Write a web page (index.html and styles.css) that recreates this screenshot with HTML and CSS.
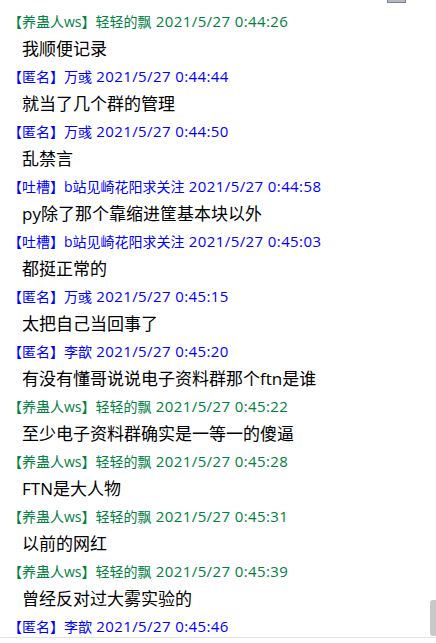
FILE: index.html
```html
<!DOCTYPE html>
<html lang="zh-CN">
<head>
<meta charset="utf-8">
<title>聊天记录</title>
<link rel="stylesheet" href="styles.css">
</head>
<body>
<div class="viewport">
  <div class="top-strip"><div class="top-box"></div></div>
  <div class="log">
    <div class="msg">
      <div class="head green">【养蛊人ws】轻轻的飘<span class="time"> 2021/5/27 0:44:26</span></div>
      <div class="body">我顺便记录</div>
    </div>
    <div class="msg">
      <div class="head blue">【匿名】万彧<span class="time"> 2021/5/27 0:44:44</span></div>
      <div class="body">就当了几个群的管理</div>
    </div>
    <div class="msg">
      <div class="head blue">【匿名】万彧<span class="time"> 2021/5/27 0:44:50</span></div>
      <div class="body">乱禁言</div>
    </div>
    <div class="msg">
      <div class="head blue">【吐槽】b站见崎花阳求关注<span class="time"> 2021/5/27 0:44:58</span></div>
      <div class="body">py除了那个靠缩进筐基本块以外</div>
    </div>
    <div class="msg">
      <div class="head blue">【吐槽】b站见崎花阳求关注<span class="time"> 2021/5/27 0:45:03</span></div>
      <div class="body">都挺正常的</div>
    </div>
    <div class="msg">
      <div class="head blue">【匿名】万彧<span class="time"> 2021/5/27 0:45:15</span></div>
      <div class="body">太把自己当回事了</div>
    </div>
    <div class="msg">
      <div class="head blue">【匿名】李歆<span class="time"> 2021/5/27 0:45:20</span></div>
      <div class="body">有没有懂哥说说电子资料群那个ftn是谁</div>
    </div>
    <div class="msg">
      <div class="head green">【养蛊人ws】轻轻的飘<span class="time"> 2021/5/27 0:45:22</span></div>
      <div class="body">至少电子资料群确实是一等一的傻逼</div>
    </div>
    <div class="msg">
      <div class="head green">【养蛊人ws】轻轻的飘<span class="time"> 2021/5/27 0:45:28</span></div>
      <div class="body">FTN是大人物</div>
    </div>
    <div class="msg">
      <div class="head green">【养蛊人ws】轻轻的飘<span class="time"> 2021/5/27 0:45:31</span></div>
      <div class="body">以前的网红</div>
    </div>
    <div class="msg">
      <div class="head green">【养蛊人ws】轻轻的飘<span class="time"> 2021/5/27 0:45:39</span></div>
      <div class="body">曾经反对过大雾实验的</div>
    </div>
    <div class="msg">
      <div class="head blue">【匿名】李歆<span class="time"> 2021/5/27 0:45:46</span></div>
    </div>
  </div>
  <div class="scroll-thumb"></div>
</div>
</body>
</html>
```

FILE: styles.css
```css
html, body {
  margin: 0;
  padding: 0;
  background: #ffffff;
}

.viewport {
  position: relative;
  height: 637px;
  overflow: hidden;
  border-bottom: 1px solid #e3e3e3;
  font-family: "Open Sans", "Noto Sans CJK SC", sans-serif;
}

.top-strip {
  height: 3px;
  display: flex;
  padding-left: 387px;
}

.top-box {
  width: 19px;
  height: 3px;
  box-sizing: border-box;
  background: #b4b8c0;
  border: 1px solid #7c8292;
  border-top: none;
}

.log {
  padding: 6px 0 0 8px;
}

.head {
  font-size: 14px;
  line-height: 24px;
  height: 24px;
  white-space: nowrap;
}

.time {
  font-size: 15px;
  letter-spacing: 0.4px;
}

.green { color: #008040; }
.blue { color: #0000ff; }

.body {
  font-size: 17px;
  line-height: 31px;
  height: 31px;
  padding-left: 14px;
  color: #000000;
  white-space: nowrap;
}

.scroll-thumb {
  position: absolute;
  right: 0;
  top: 600px;
  width: 6px;
  height: 36px;
  background: #c8c8c8;
  border-radius: 3px 0 0 3px;
}
```
